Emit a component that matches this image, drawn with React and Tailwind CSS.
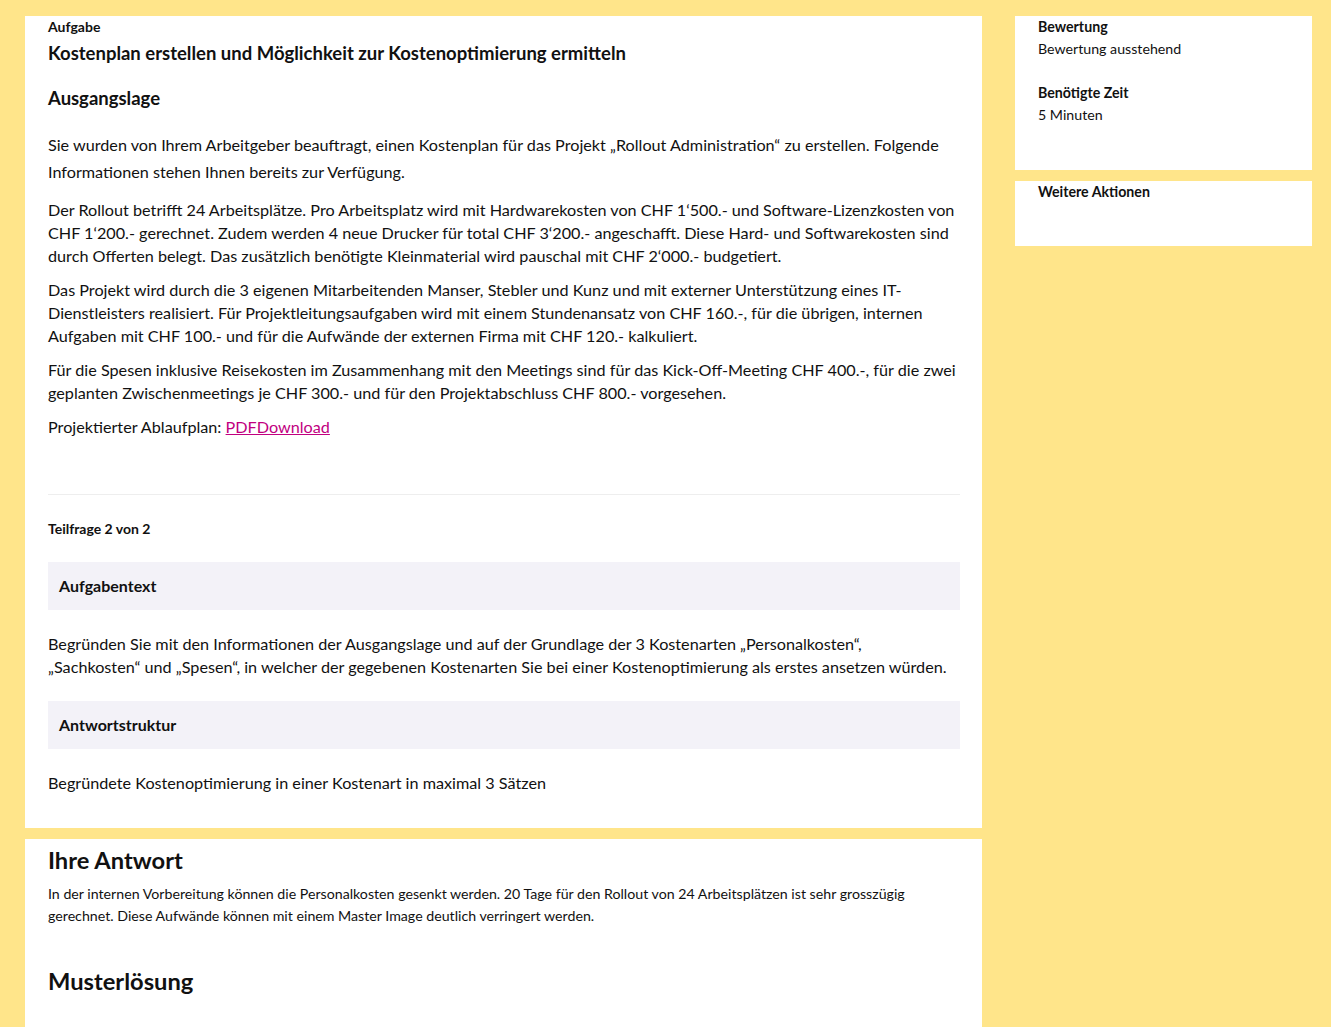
const font = { fontFamily: "Lato, 'Open Sans', sans-serif" };

function InfoBox({ children }) {
  return (
    <div className="flex h-12 items-center bg-[#f3f2f8] pl-[11px] text-[16px] font-bold text-[#111]">
      {children}
    </div>
  );
}

export default function App() {
  return (
    <div
      className="flex min-h-screen gap-[33px] bg-[#ffe58a] pl-[25px] pr-[19px] pt-4 text-[#111]"
      style={font}
    >
      <div className="flex w-[957px] shrink-0 flex-col gap-[11px]">
        <section className="bg-white pb-[34px] pl-[23px] pr-[22px] pt-[2px]">
          <p className="text-[14px] font-bold leading-[18px]">Aufgabe</p>
          <h2 className="mt-[5px] text-[18.5px] font-bold leading-6">
            Kostenplan erstellen und Möglichkeit zur Kostenoptimierung ermitteln
          </h2>
          <h3 className="mt-[21px] text-[18.5px] font-bold leading-6">Ausgangslage</h3>

          <div className="whitespace-nowrap text-[16.2px]">
            <p className="mt-[21px] leading-[27px]">
              Sie wurden von Ihrem Arbeitgeber beauftragt, einen Kostenplan für das Projekt „Rollout Administration“ zu erstellen. Folgende
              <br />
              Informationen stehen Ihnen bereits zur Verfügung.
            </p>
            <p className="mt-[13px] leading-[23px]">
              Der Rollout betrifft 24 Arbeitsplätze. Pro Arbeitsplatz wird mit Hardwarekosten von CHF 1‘500.- und Software-Lizenzkosten von
              <br />
              CHF 1‘200.- gerechnet. Zudem werden 4 neue Drucker für total CHF 3‘200.- angeschafft. Diese Hard- und Softwarekosten sind
              <br />
              durch Offerten belegt. Das zusätzlich benötigte Kleinmaterial wird pauschal mit CHF 2‘000.- budgetiert.
            </p>
            <p className="mt-[11px] leading-[23px]">
              Das Projekt wird durch die 3 eigenen Mitarbeitenden Manser, Stebler und Kunz und mit externer Unterstützung eines IT-
              <br />
              Dienstleisters realisiert. Für Projektleitungsaufgaben wird mit einem Stundenansatz von CHF 160.-, für die übrigen, internen
              <br />
              Aufgaben mit CHF 100.- und für die Aufwände der externen Firma mit CHF 120.- kalkuliert.
            </p>
            <p className="mt-[11px] leading-[23px]">
              Für die Spesen inklusive Reisekosten im Zusammenhang mit den Meetings sind für das Kick-Off-Meeting CHF 400.-, für die zwei
              <br />
              geplanten Zwischenmeetings je CHF 300.- und für den Projektabschluss CHF 800.- vorgesehen.
            </p>
            <p className="mt-[11px] leading-[23px]">
              Projektierter Ablaufplan:{" "}
              <a href="#" className="text-[#c1007f] underline">
                PDFDownload
              </a>
            </p>
          </div>

          <hr className="mt-[56px] border-[#eeeeee]" />

          <p className="mt-[25px] text-[14px] font-bold leading-[18px]">Teilfrage 2 von 2</p>

          <div className="mt-6">
            <InfoBox>Aufgabentext</InfoBox>
          </div>
          <p className="mb-[23px] mt-[22px] whitespace-nowrap text-[16.2px] leading-[23px]">
            Begründen Sie mit den Informationen der Ausgangslage und auf der Grundlage der 3 Kostenarten „Personalkosten“,
            <br />
            „Sachkosten“ und „Spesen“, in welcher der gegebenen Kostenarten Sie bei einer Kostenoptimierung als erstes ansetzen würden.
          </p>
          <InfoBox>Antwortstruktur</InfoBox>
          <p className="mt-[22px] text-[16.2px] leading-[23px]">
            Begründete Kostenoptimierung in einer Kostenart in maximal 3 Sätzen
          </p>
        </section>

        <section className="min-h-[200px] bg-white pl-[23px] pr-[22px] pt-[7px]">
          <h2 className="text-[23.7px] font-bold leading-7">Ihre Antwort</h2>
          <p className="mt-[9px] whitespace-nowrap text-[14.2px] leading-[22px]">
            In der internen Vorbereitung können die Personalkosten gesenkt werden. 20 Tage für den Rollout von 24 Arbeitsplätzen ist sehr grosszügig
            <br />
            gerechnet. Diese Aufwände können mit einem Master Image deutlich verringert werden.
          </p>
          <h2 className="mt-[40px] text-[23.7px] font-bold leading-7">Musterlösung</h2>
        </section>
      </div>

      <aside className="flex flex-1 flex-col gap-[11px]">
        <div className="h-[154px] bg-white px-[23px] pt-[2px] text-[14.2px]">
          <p className="font-bold leading-[18px]">Bewertung</p>
          <p className="mt-1 leading-[18px]">Bewertung ausstehend</p>
          <p className="mt-[26px] font-bold leading-[18px]">Benötigte Zeit</p>
          <p className="mt-1 leading-[18px]">5 Minuten</p>
        </div>
        <div className="h-[65px] bg-white px-[23px] pt-[2px] text-[14.2px]">
          <p className="font-bold leading-[18px]">Weitere Aktionen</p>
        </div>
      </aside>
    </div>
  );
}
